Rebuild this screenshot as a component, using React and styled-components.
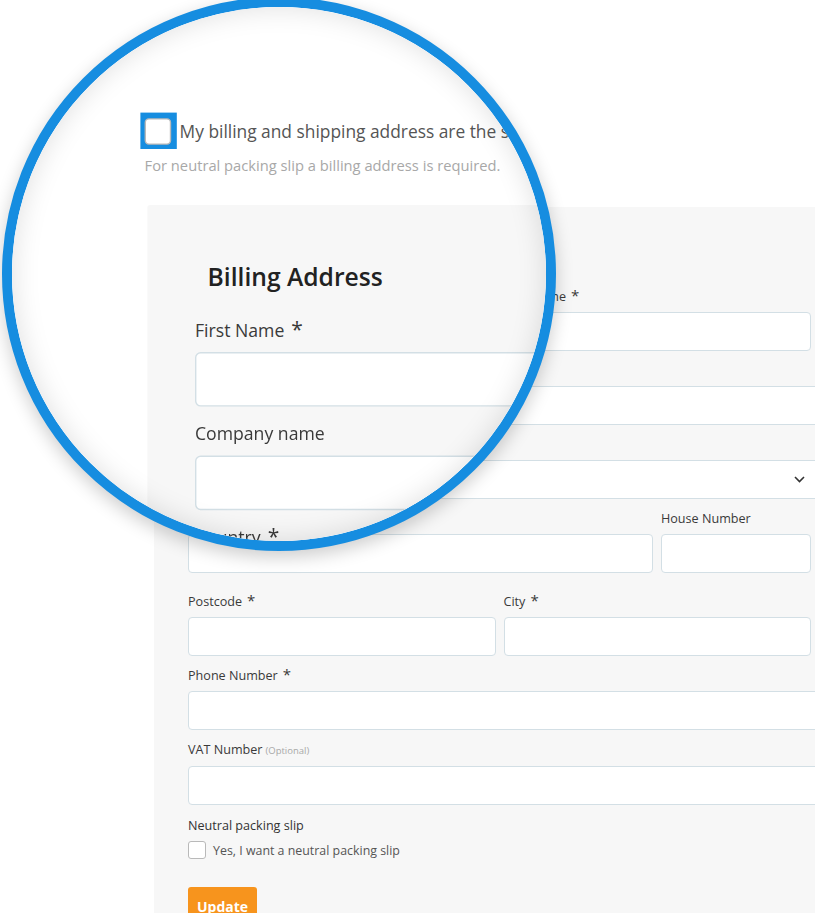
import styled, { createGlobalStyle } from "styled-components"

const GlobalStyle = createGlobalStyle`
  html, body {
    margin: 0;
    padding: 0;
    background: #fff;
  }
  body {
    font-family: "Open Sans", "Liberation Sans", sans-serif;
  }
`

const Viewport = styled.div`
  position: relative;
  width: 815px;
  height: 913px;
  overflow: hidden;
  background: #fff;
`

const Page = styled.div`
  width: 815px;
  height: 913px;
  box-sizing: border-box;
  padding: 144px 0 0 152px;
  background: #fff;
  color: #3a3a3a;
`

const CheckLine = styled.label`
  display: flex;
  align-items: center;
  gap: ${(p) => p.$gap}px;
  height: 20px;
  font-size: 12.4px;
  color: #555;
  white-space: nowrap;
`

// square blue focus frame round the first checkbox
const FocusFrame = styled.span`
  display: flex;
  flex: none;
  margin: -3.5px;
  padding: 3.5px;
  background: #168de0;
`

const Box = styled.span`
  flex: none;
  width: ${(p) => p.$size}px;
  height: ${(p) => p.$size}px;
  box-sizing: border-box;
  border: 1px solid #b9b9b9;
  border-radius: 3px;
  background: #fff;
`

const Hint = styled.p`
  margin: 8px 0 0;
  font-size: 10.5px;
  line-height: 14px;
  color: #a8a8a8;
`

const Panel = styled.section`
  margin: 21px 0 0 2px;
  width: 700px;
  min-height: 760px;
  box-sizing: border-box;
  padding: 39px 0 0 34px;
  background: #f7f7f7;
  border-radius: 2px;
`

const Heading = styled.h2`
  margin: 0 0 18px 9px;
  font-size: 17.6px;
  line-height: 24px;
  font-weight: 600;
  color: #222;
`

const Row = styled.div`
  display: grid;
  grid-template-columns: ${(p) => p.$cols || "1fr"};
  column-gap: 8px;
  width: ${(p) => (p.$wide ? 642 : 623)}px;
  margin-bottom: ${(p) => p.$after ?? 11}px;
`

const Field = styled.div`
  display: flex;
  flex-direction: column;
  min-width: 0;
`

const Label = styled.span`
  display: block;
  margin-bottom: 7px;
  font-size: 12.6px;
  line-height: 17px;
  color: #3a3a3a;
  white-space: nowrap;
`

const Req = styled.span`
  margin-left: 5px;
  font-size: 15px;
  line-height: 0;
`

const Optional = styled.span`
  margin-left: 3px;
  font-size: 9.5px;
  color: #a8a8a8;
`

const Input = styled.input`
  display: block;
  width: 100%;
  height: 39px;
  box-sizing: border-box;
  margin: 0;
  padding: 0 12px;
  border: 1px solid #d3dfe5;
  border-radius: 4px;
  background: #fff;
  font: inherit;
  outline: none;
`

const Select = styled.div`
  display: flex;
  align-items: center;
  justify-content: flex-end;
  height: 39px;
  box-sizing: border-box;
  padding-right: 24px;
  border: 1px solid #d3dfe5;
  border-radius: 4px;
  background: #fff;
`

const SectionLabel = styled.div`
  font-size: 12.6px;
  line-height: 17px;
  color: #333;
`

const SlipLine = styled(CheckLine)`
  margin-top: 7px;
  height: 18px;
`

const UpdateButton = styled.button`
  display: block;
  margin-top: 28px;
  height: 38px;
  padding: 0 9px;
  border: none;
  border-radius: 3px;
  background: #f7941d;
  color: #fff;
  font-family: "Open Sans", "Liberation Sans", sans-serif;
  font-size: 14px;
  font-weight: 700;
`

const Lens = styled.div`
  position: absolute;
  left: 2px;
  top: -3px;
  width: 554px;
  height: 554px;
  box-sizing: border-box;
  border: 10px solid #168de0;
  border-radius: 50%;
  overflow: hidden;
  background: #fff;
  box-shadow: 0 6px 18px rgba(0, 0, 0, 0.2);

  &::after {
    content: "";
    position: absolute;
    inset: 0;
    border-radius: 50%;
    box-shadow: inset 0 0 28px rgba(0, 0, 0, 0.13);
    pointer-events: none;
  }
`

const Magnified = styled.div`
  position: absolute;
  left: -12px;
  top: -7px;
  transform: scale(1.4);
  transform-origin: 170.5px 212px;
`

const Chevron = () => (
  <svg width="11" height="7" viewBox="0 0 11 7" fill="none">
    <path d="M1 1l4.5 4.5L10 1" stroke="#333" strokeWidth="1.6" />
  </svg>
)

const TextField = ({ label, required, optional }) => (
  <Field>
    <Label>
      {label}
      {required && <Req>*</Req>}
      {optional && <Optional>(Optional)</Optional>}
    </Label>
    <Input type="text" />
  </Field>
)

const BillingForm = () => (
  <Page>
    <CheckLine $gap={6}>
      <FocusFrame>
        <Box $size={19} />
      </FocusFrame>
      My billing and shipping address are the same
    </CheckLine>
    <Hint>For neutral packing slip a billing address is required.</Hint>

    <Panel>
      <Heading>Billing Address</Heading>

      <Row $cols="1fr 1fr">
        <TextField label="First Name" required />
        <TextField label="Last Name" required />
      </Row>
      <Row $wide>
        <TextField label="Company name" />
      </Row>
      <Row $wide>
        <Field>
          <Label>
            Country<Req>*</Req>
          </Label>
          <Select>
            <Chevron />
          </Select>
        </Field>
      </Row>
      <Row $cols="465px 150px" $after={20}>
        <TextField label="Street" required />
        <TextField label="House Number" />
      </Row>
      <Row $cols="1fr 1fr">
        <TextField label="Postcode" required />
        <TextField label="City" required />
      </Row>
      <Row $wide>
        <TextField label="Phone Number" required />
      </Row>
      <Row $wide $after={12}>
        <TextField label="VAT Number" optional />
      </Row>

      <SectionLabel>Neutral packing slip</SectionLabel>
      <SlipLine $gap={7}>
        <Box $size={18} />
        Yes, I want a neutral packing slip
      </SlipLine>
      <UpdateButton>Update</UpdateButton>
    </Panel>
  </Page>
)

export default function App() {
  return (
    <>
      <GlobalStyle />
      <Viewport>
        <BillingForm />
        <Lens aria-hidden="true">
          <Magnified>
            <BillingForm />
          </Magnified>
        </Lens>
      </Viewport>
    </>
  )
}
